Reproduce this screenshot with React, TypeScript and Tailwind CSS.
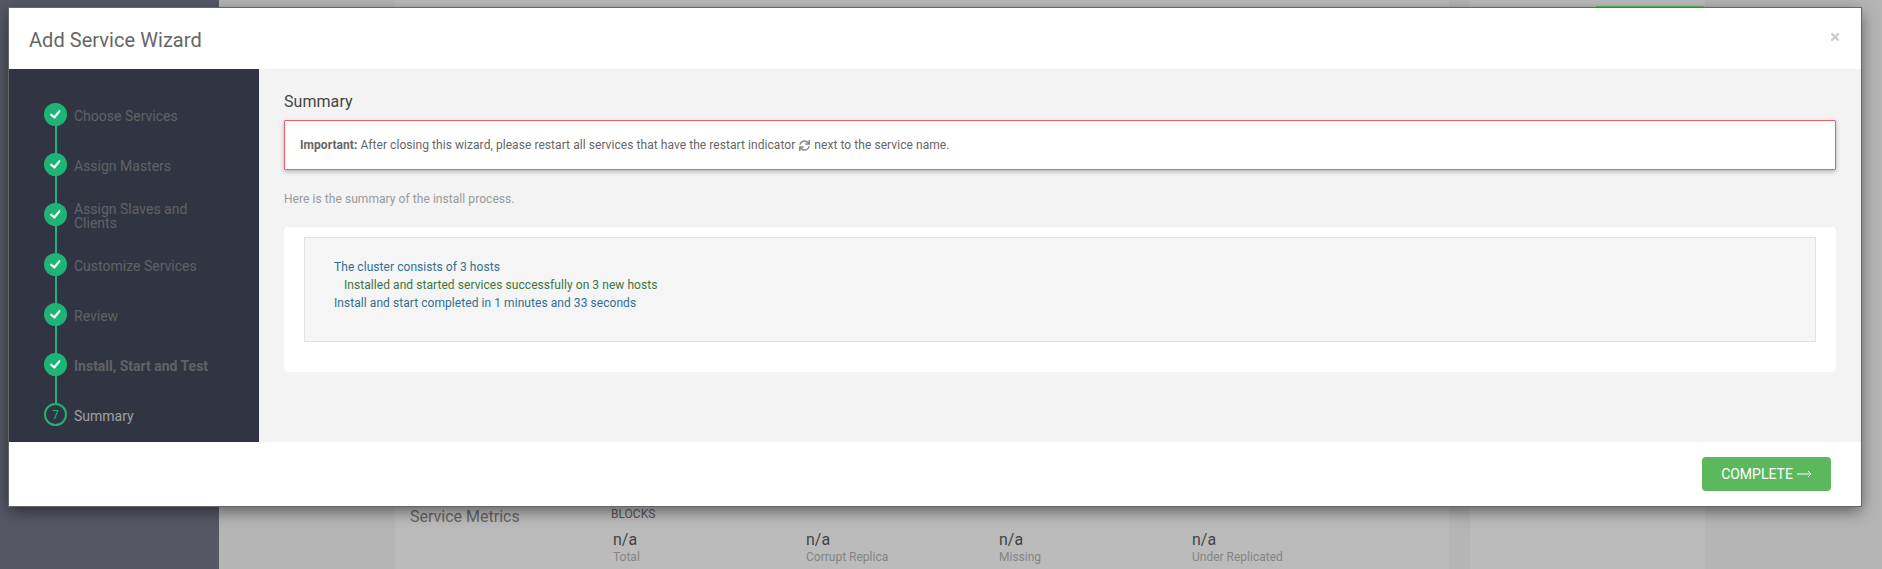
import React from 'react';
import { FaCheck, FaSync, FaTimes } from 'react-icons/fa';

const steps = [
  { label: 'Choose Services' },
  { label: 'Assign Masters' },
  { label: 'Assign Slaves and Clients', twoLines: true },
  { label: 'Customize Services' },
  { label: 'Review' },
  { label: 'Install, Start and Test', bold: true },
];

const metrics = ['Total', 'Corrupt Replica', 'Missing', 'Under Replicated'];

function Backdrop() {
  return (
    <div className="flex h-[569px] w-full overflow-hidden bg-[#b5b5b5]">
      <div className="w-[219px] shrink-0 bg-[#555864]" />
      <div className="flex flex-1 pl-[176px]">
        <div className="w-[1054px] shrink-0 bg-[#bbbbbb]">
          <div className="flex pl-[15px] pt-[506px]">
            <div className="w-[201px] pt-[1px] text-base leading-5 text-[#666666]">Service Metrics</div>
            <div>
              <div className="text-xs leading-4 text-[#555555]">BLOCKS</div>
              <div className="mt-[9px] flex pl-[2px]">
                {metrics.map((m) => (
                  <div key={m} className="w-[193px]">
                    <div className="text-base leading-[18px] text-[#444444]">n/a</div>
                    <div className="text-xs leading-4 text-[#858585]">{m}</div>
                  </div>
                ))}
              </div>
            </div>
          </div>
        </div>
        <div className="ml-[21px] w-[235px] bg-[#bbbbbb]">
          <div className="ml-[126px] mt-[6px] h-[2px] w-[108px] bg-[#5cb85c]" />
        </div>
      </div>
    </div>
  );
}

function StepItem({ label, bold, twoLines }: { label: string; bold?: boolean; twoLines?: boolean }) {
  return (
    <li className="relative flex h-[50px] items-start pl-[35px]">
      <div className="absolute left-[46px] top-0 h-[50px] w-[2px] bg-[#1eb475]" />
      <div className="relative flex h-[23px] w-[23px] shrink-0 items-center justify-center rounded-full bg-[#1eb475]">
        <FaCheck className="h-[11px] w-[11px] -rotate-6 text-white" />
      </div>
      <div className={`ml-[7px] flex min-h-[25px] w-[155px] items-center text-sm leading-[14px] text-[#606166] ${bold ? 'font-bold' : ''} ${twoLines ? '-mt-[1px]' : ''}`}>
        {label}
      </div>
    </li>
  );
}

export default function App() {
  return (
    <div className="relative font-[Roboto,sans-serif]">
      <Backdrop />

      {/* wizard modal */}
      <div className="absolute left-[9px] top-[8px] flex h-[498px] w-[1852px] flex-col bg-white shadow-[0_5px_15px_rgba(0,0,0,0.5)] outline outline-1 outline-[#666666]">
        <div className="relative flex h-[61px] shrink-0 items-center pl-[20px] pt-[2px]">
          <h4 className="text-[20px] tracking-[0.05px] text-[#666666]">Add Service Wizard</h4>
          <FaTimes className="absolute right-[20px] top-[23px] h-[12px] w-[12px] text-[#cccccc]" />
        </div>

        <div className="flex min-h-0 flex-1">
          <div className="w-[250px] shrink-0 bg-[#313543] pt-[34px]">
            <ul>
              {steps.map((s) => (
                <StepItem key={s.label} label={s.label} bold={s.bold} twoLines={s.twoLines} />
              ))}
              <li className="flex items-start pl-[35px]">
                <div className="flex h-[23px] w-[23px] shrink-0 items-center justify-center rounded-full border-2 border-[#1eb475] text-xs text-[#1eb475]">
                  7
                </div>
                <div className="ml-[7px] flex h-[25px] items-center text-sm text-[#a0a0a4]">Summary</div>
              </li>
            </ul>
          </div>

          <div className="flex-1 bg-[#f3f3f3] px-[25px] pt-[23px] tracking-[0.06px]">
            <h5 className="text-base leading-[20px] text-[#444444]">Summary</h5>
            <div className="mt-[8px] flex h-[50px] items-center rounded-[1px] border border-[#ef5f63] bg-white pl-[15px] text-xs text-[#666666] shadow-[0_2px_4px_rgba(0,0,0,0.25)]">
              <strong className="mr-[3px] font-bold">Important:</strong>
              After closing this wizard, please restart all services that have the restart indicator
              <FaSync className="mx-[4px] h-[11px] w-[11px] text-[#888888]" />
              next to the service name.
            </div>
            <p className="mt-[21px] text-xs leading-[16px] text-[#999999]">Here is the summary of the install process.</p>
            <div className="mt-[20px] rounded bg-white px-[20px] pb-[30px] pt-[10px]">
              <div className="h-[105px] border border-[#e3e3e3] bg-[#f5f5f5] pl-[29px] pt-[20px] text-xs leading-[18px]">
                <div className="text-[#31708f]">The cluster consists of 3 hosts</div>
                <div className="pl-[10px] text-[#3c763d]">Installed and started services successfully on 3 new hosts</div>
                <div className="text-[#31708f]">Install and start completed in 1 minutes and 33 seconds</div>
              </div>
            </div>
          </div>
        </div>

        <div className="flex h-[64px] shrink-0 items-start justify-end pr-[30px] pt-[15px]">
          <button className="flex h-[34px] w-[129px] items-center justify-center gap-[4px] rounded bg-[#5cb85c] text-sm uppercase text-white">
            Complete
            <svg width="15" height="8" viewBox="0 0 15 8" fill="none" stroke="currentColor" strokeWidth="1">
              <path d="M0 4h14M11 1l3 3-3 3" />
            </svg>
          </button>
        </div>
      </div>
    </div>
  );
}
